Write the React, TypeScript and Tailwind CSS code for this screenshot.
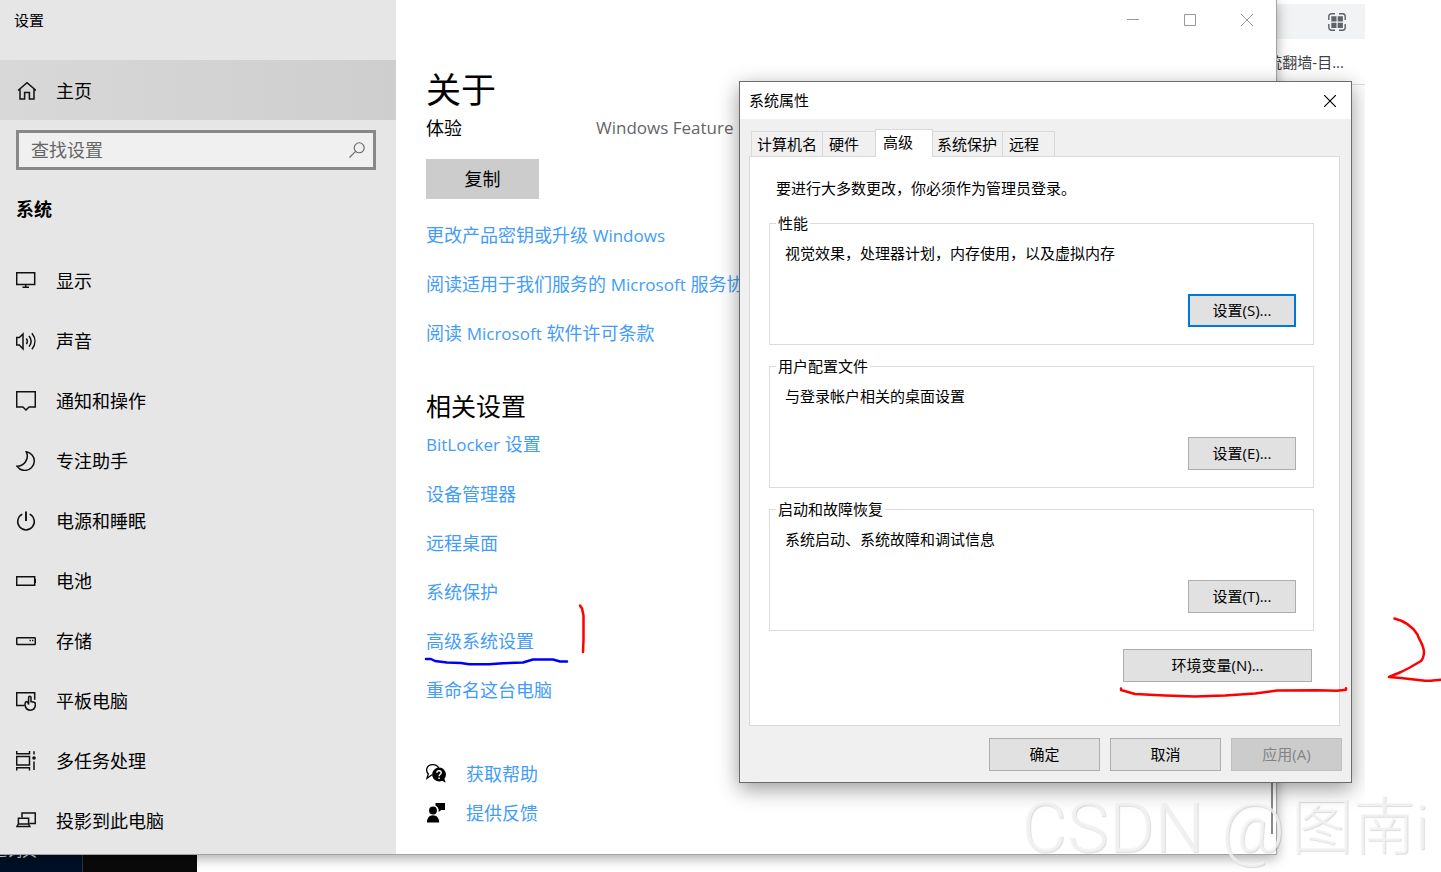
import type { ReactNode } from "react";

const FONT = "font-['Open_Sans','Noto_Sans_CJK_SC',sans-serif]";

function Icon({ children }: { children: ReactNode }) {
  return (
    <svg
      aria-hidden="true"
      className="size-5 shrink-0"
      viewBox="0 0 20 20"
      fill="none"
      stroke="#111"
      strokeWidth="1.5"
    >
      {children}
    </svg>
  );
}

const navItems: { label: string; icon: ReactNode }[] = [
  {
    label: "显示",
    icon: <path d="M.7 1.700h18v11.800H.7zM6.500 16.300h6.500M9.700 13.500v2.800" />,
  },
  {
    label: "声音",
    icon: (
      <>
        <path d="M.7 6.600h2.600L7 3.100v14.800l-3.700-4H.7z" />
        <path d="M10.300 7.500c1.300 1.700 1.300 3.900 0 5.600M13 5c2.600 3.200 2.600 7.400 0 10.600M15.900 2.300c4 4.900 4 11.100 0 16" />
      </>
    ),
  },
  {
    label: "通知和操作",
    icon: <path d="M.7.8h18.600v15.200h-6.200l-3.100 3-3.100-3H.7z" />,
  },
  {
    label: "专注助手",
    icon: (
      <path d="M10.300.8c3.200 6.600-1.800 14.400-9.300 14.500 1.900 2.600 4.600 4.100 7.600 4.100 5.300 0 9.700-4.100 9.700-9.400 0-4.500-3.300-8.300-8-9.200z" />
    ),
  },
  {
    label: "电源和睡眠",
    icon: (
      <>
        <path d="M6.300 3.200a8.300 8.300 0 1 0 7.400 0" />
        <path d="M10 .5v9.500" strokeWidth="1.900" />
      </>
    ),
  },
  {
    label: "电池",
    icon: (
      <>
        <path d="M.7 5.700h18v8.600H.7z" />
        <path d="M19.400 8v4" strokeWidth="1.600" />
      </>
    ),
  },
  {
    label: "存储",
    icon: (
      <>
        <rect x=".7" y="6.700" width="18.600" height="6.800" rx=".8" />
        <path d="M13.500 9.500h1.400M16 9.500h1.400" />
      </>
    ),
  },
  {
    label: "平板电脑",
    icon: (
      <>
        <path d="M8.500 14.400H.7V1.700h18v7" />
        <path d="M12.600 13.500V6.600c0-1.900 2.400-1.900 2.400 0v4l3 .6c1 .3 1.400.9 1.400 1.800 0 4-1.700 6.200-5 6.200-3 0-4.700-1.700-5.300-4.700-.3-1.800.2-3.300 1-3.900.9-.4 1.700.4 2.500 2.900z" />
      </>
    ),
  },
  {
    label: "多任务处理",
    icon: (
      <>
        <path d="M.7 5.500h12.800v8.500H.7zM.7 0v2.700h12.800V0M.7 19.600V16.700h12.800v2.900M18 .3v3.200M18 10.500v8.500" />
        <circle cx="18" cy="7" r="1.800" fill="#111" stroke="none" />
      </>
    ),
  },
  {
    label: "投影到此电脑",
    icon: (
      <>
        <path d="M6 6.500V1.900h13.300v10.700h-6" />
        <path d="M2.400 12.800V7.300h10.200v5.500M.9 15.500l1.500-2.600h10.200l1.200 2.600z" />
      </>
    ),
  },
];

function Latin({ children }: { children: ReactNode }) {
  return <span className="text-[17px]">{children}</span>;
}

const licenseLinks: ReactNode[] = [
  <>
    更改产品密钥或升级 <Latin>Windows</Latin>
  </>,
  <>
    阅读适用于我们服务的 <Latin>Microsoft</Latin> 服务协议
  </>,
  <>
    阅读 <Latin>Microsoft</Latin> 软件许可条款
  </>,
];

const relatedLinks: ReactNode[] = [
  <>
    <Latin>BitLocker</Latin> 设置
  </>,
  "设备管理器",
  "远程桌面",
  "系统保护",
  "高级系统设置",
  "重命名这台电脑",
];

function LinkList({ items }: { items: ReactNode[] }) {
  return (
    <ul>
      {items.map((item, i) => (
        <li key={i} className="flex h-[49px] items-center">
          <a href="#" className="whitespace-nowrap text-[#429cf8]">
            {item}
          </a>
        </li>
      ))}
    </ul>
  );
}

function Sidebar() {
  return (
    <aside className="w-[396px] shrink-0 bg-[#e6e6e6] pb-[3px]">
      <div className="flex h-[60px] items-start px-3.5 pt-2.5 text-[15px] leading-5">设置</div>
      <a
        href="#"
        className="flex h-[60px] items-center gap-5 bg-linear-to-r from-[#d8d8d8] to-[#cecece] px-4 pt-0.5"
      >
        <svg
          aria-hidden="true"
          className="size-5 shrink-0"
          viewBox="0 0 20 20"
          fill="none"
          stroke="#111"
          strokeWidth="1.500"
        >
          <path d="M2 9.500 11 1.700l9 7.800M4 8.300v9.800h4.600v-6.500h4.800v6.500H18V8.300" />
        </svg>
        <span>主页</span>
      </a>
      <label className="mx-4 mt-2.5 mr-5 flex h-10 items-center border-[3px] border-[#888] bg-[#f0f0f0] pr-2 pl-3">
        <input
          type="search"
          aria-label="查找设置"
          placeholder="查找设置"
          className="min-w-0 flex-1 bg-transparent outline-none placeholder:text-[#666]"
        />
        <svg
          aria-hidden="true"
          className="size-4 shrink-0"
          viewBox="0 0 16 16"
          fill="none"
          stroke="#666"
          strokeWidth="1.1"
        >
          <circle cx="10.200" cy="5.800" r="5" />
          <path d="M6.600 9.400.5 15.500" />
        </svg>
      </label>
      <h2 className="flex h-[81px] items-center px-4 pb-1 font-bold">系统</h2>
      <nav>
        {navItems.map((item) => (
          <a key={item.label} href="#" className="flex h-[60px] items-center gap-5 px-4">
            <Icon>{item.icon}</Icon>
            <span>{item.label}</span>
          </a>
        ))}
      </nav>
    </aside>
  );
}

function AboutPage() {
  return (
    <main className="relative min-w-0 flex-1 pl-[30px]">
      <div className="flex h-10 justify-end pr-px">
        <button type="button" aria-label="最小化" className="flex w-[57px] items-center justify-center">
          <svg className="size-3" viewBox="0 0 12 12" stroke="#999">
            <path d="M0 5.500h12" />
          </svg>
        </button>
        <button type="button" aria-label="最大化" className="flex w-[57px] items-center justify-center">
          <svg className="size-3" viewBox="0 0 12 12" stroke="#999" fill="none">
            <path d="M.5.500h11v11H.5z" />
          </svg>
        </button>
        <button type="button" aria-label="关闭" className="flex w-[57px] items-center justify-center">
          <svg className="size-3" viewBox="0 0 12 12" stroke="#999">
            <path d="m0 0 12 12M12 0 0 12" />
          </svg>
        </button>
      </div>
      <h1 className="mt-[30px] text-[35px] leading-10">关于</h1>
      <dl className="mt-1.5 flex h-6 items-center whitespace-nowrap">
        <dt className="w-[170px]">体验</dt>
        <dd className="text-[17px] text-[#666]">Windows Feature E</dd>
      </dl>
      <button type="button" className="mt-[19px] mb-3 block h-10 w-[113px] bg-[#ccc]">
        复制
      </button>
      <LinkList items={licenseLinks} />
      <h2 className="mt-[34px] text-[25px] leading-7">相关设置</h2>
      <LinkList items={relatedLinks} />
      <div className="mt-10">
        <a href="#" className="flex h-[39px] items-center gap-5 text-[#429cf8]">
          <svg aria-hidden="true" className="size-5" viewBox="0 0 20 20">
            <path
              d="M6 10.800 1 14.300l1.300-4.300C.7 8.300.5 6.400.7 5.100 1.300 2.100 4 .7 7 .7c2.700 0 4.700 1.400 5.600 3.300"
              fill="none"
              stroke="#000"
              strokeWidth="1.300"
            />
            <path d="M13 3.500a7 7 0 1 0 3.200 13.300l3.500 2-1.300-4A7 7 0 0 0 13 3.500z" fill="#000" />
            <path
              d="M10.900 8.700c0-2.700 4.300-2.700 4.300 0 0 1.600-2.100 1.600-2.100 3.500M13.100 13.500v1.500"
              fill="none"
              stroke="#fff"
              strokeWidth="1.400"
            />
          </svg>
          <span>获取帮助</span>
        </a>
        <a href="#" className="flex h-[39px] items-center gap-5 text-[#429cf8]">
          <svg aria-hidden="true" className="size-5" viewBox="0 0 20 20">
            <circle cx="7" cy="7.500" r="3.900" />
            <path d="M1 19.500c0-4.500 2.300-7.300 6-7.300s6.200 2.800 6.200 7.300zM9.500 0H19v7h-3.800L12.600 9V6.200C12 4.200 11 3.300 9.500 2.700z" />
          </svg>
          <span>提供反馈</span>
        </a>
      </div>
      <div className="absolute top-[500px] right-[3px] bottom-5 w-0.5 bg-[#888]" />
    </main>
  );
}

const groups = [
  { title: "性能", text: "视觉效果，处理器计划，内存使用，以及虚拟内存", button: "设置(S)...", focused: true },
  { title: "用户配置文件", text: "与登录帐户相关的桌面设置", button: "设置(E)...", focused: false },
  { title: "启动和故障恢复", text: "系统启动、系统故障和调试信息", button: "设置(T)...", focused: false },
];

const tabs = [
  { label: "计算机名", box: "w-[72px] pl-[5px]" },
  { label: "硬件", box: "w-[54px] pl-1.5" },
  { label: "高级", box: "w-[58px] pl-[7px]" },
  { label: "系统保护", box: "w-[71px] pl-1" },
  { label: "远程", box: "w-[53px] pl-1.5" },
];

function SystemProperties() {
  return (
    <section
      role="dialog"
      aria-label="系统属性"
      className="absolute top-[81px] left-[739px] w-[613px] border border-[#6b6b6b] bg-[#f0f0f0] text-[15px] leading-5 shadow-[0_6px_20px_rgba(0,0,0,0.4)]"
    >
      <header className="flex h-[37px] items-center justify-between bg-white pr-[15px] pl-[9px]">
        <h2 className="pb-0.5">系统属性</h2>
        <button type="button" aria-label="关闭">
          <svg className="size-3" viewBox="0 0 12 12" stroke="#000" strokeWidth="1.200">
            <path d="m0 0 12 12M12 0 0 12" />
          </svg>
        </button>
      </header>
      <div role="tablist" className="flex items-end pt-2.5 pl-[11px]">
        {tabs.map((tab) =>
          tab.label === "高级" ? (
            <button
              key={tab.label}
              role="tab"
              type="button"
              aria-selected="true"
              className={`relative z-10 -mb-px -ml-px flex h-7 items-start border border-b-0 border-[#d9d9d9] bg-white pt-0.5 ${tab.box}`}
            >
              {tab.label}
            </button>
          ) : (
            <button
              key={tab.label}
              role="tab"
              type="button"
              aria-selected="false"
              className={`-ml-px flex h-[25px] items-start border border-b-0 border-[#d9d9d9] pt-0.5 whitespace-nowrap first:ml-0 ${tab.box}`}
            >
              {tab.label}
            </button>
          ),
        )}
      </div>
      <div
        role="tabpanel"
        className="mr-[11px] ml-[9px] border border-[#d9d9d9] bg-white pt-[21px] pr-[25px] pb-[43px] pl-[19px]"
      >
        <p className="mb-[15px] pl-[7px]">要进行大多数更改，你必须作为管理员登录。</p>
        <div className="flex flex-col gap-[11px]">
          {groups.map((g) => (
            <fieldset key={g.title} className="border border-[#dcdcdc]">
              <legend className="ml-1.5 px-0.5">{g.title}</legend>
              <div className="flex flex-col pt-2.5 pr-[17px] pb-[17px] pl-[15px]">
                <p>{g.text}</p>
                <button
                  type="button"
                  className={
                    g.focused
                      ? "mt-[31px] h-[33px] w-[108px] self-end border-2 border-[#0078d7] bg-[#e1e1e1] pb-0.5"
                      : "mt-[31px] h-[33px] w-[108px] self-end border border-[#adadad] bg-[#e1e1e1] pb-0.5"
                  }
                >
                  {g.button}
                </button>
              </div>
            </fieldset>
          ))}
        </div>
        <button
          type="button"
          className="mt-[18px] mr-0.5 ml-auto block h-[33px] w-[189px] border border-[#adadad] bg-[#e1e1e1] pb-0.5"
        >
          环境变量(N)...
        </button>
      </div>
      <footer className="flex justify-end gap-2.5 pt-3 pr-[9px] pb-[11px]">
        <button type="button" className="h-[33px] w-[111px] border border-[#adadad] bg-[#e1e1e1] pb-0.5">
          确定
        </button>
        <button type="button" className="h-[33px] w-[111px] border border-[#adadad] bg-[#e1e1e1] pb-0.5">
          取消
        </button>
        <button
          type="button"
          disabled
          className="h-[33px] w-[111px] border border-[#bfbfbf] bg-[#ccc] pb-0.5 text-[#838383]"
        >
          应用(A)
        </button>
      </footer>
    </section>
  );
}

function BrowserBehind() {
  return (
    <div className="absolute inset-y-0 right-[76px] w-24 pt-1 text-[15px] text-[#3c4043]">
      <div className="flex h-[35px] items-center justify-end bg-[#f1f3f4] pr-[19px]">
        <svg aria-hidden="true" className="size-[18px]" viewBox="0 0 18 18" fill="none" stroke="#5f6368" strokeWidth="1.400">
          <path d="M.8 7V3.500C.8 2 2 .8 3.500.8H7M11 .8h3.500c1.500 0 2.700 1.200 2.700 2.700V7M17.200 11v3.500c0 1.500-1.200 2.700-2.700 2.700H11M7 17.200H3.500C2 17.200.8 16 .8 14.500V11" />
          <path d="M3.300 3.300h5.200v5.200H3.300zM9.700 3.300h5.200v5.200H9.700zM3.300 9.700h5.200v5.200H3.300zM9.700 9.700h5.200v5.200H9.700z" fill="#5f6368" stroke="none" />
        </svg>
      </div>
      <div className="flex h-[46px] items-center justify-end border-b border-[#dadce0] pr-[21px] whitespace-nowrap">
        统翻墙-目...
      </div>
    </div>
  );
}

export default function App() {
  return (
    <div
      className={`relative min-h-screen overflow-hidden bg-white text-[18px] leading-6 text-black ${FONT}`}
    >
      <BrowserBehind />
      <div className="absolute bottom-0 left-0 flex h-8 w-[197px] bg-[#0a0a0a] text-[15px] leading-5 text-[#ddd]">
        <div className="w-[83px] overflow-hidden border-r border-[#333] bg-[#001026]">
          <span className="-ml-2 block whitespace-nowrap">道词典</span>
        </div>
      </div>
      <div className="relative mr-[164px] flex border-r border-b border-[#a3a3a3] bg-white shadow-[0_3px_12px_rgba(0,0,0,0.35)]">
        <Sidebar />
        <AboutPage />
      </div>
      <div className="pointer-events-none absolute inset-y-0 left-0 w-[1365px] overflow-hidden">
        <div className="pointer-events-auto">
          <SystemProperties />
        </div>
      </div>
      <svg
        aria-hidden="true"
        className="pointer-events-none absolute top-[600px] left-[420px] h-[100px] w-[1021px]"
        viewBox="0 0 1021 100"
        fill="none"
        strokeWidth="2.500"
        strokeLinecap="round"
        strokeLinejoin="round"
      >
        <path
          d="M6 59h5l4 2 12 1.500 14 .5 8 1.200h20l14-1 20-.7 10-3h20l7 2h7"
          stroke="#0000f5"
        />
        <path d="M160 5.500l2 3 1.500 7v24l-.5 12.500" stroke="#f00" />
        <path
          d="M701 88.500v1.500l14 4 30 1.500 30 1 30-1 30-2 22-3 40-.2 20 .5 9-1v-1.500"
          stroke="#f00"
        />
        <path
          d="M974.500 18.500c10 2.500 18 8 23 16 1 5 6 9 6.500 17.500-.2 4-1 7-3 9l-6 3.500-6 3.500-8 4-12 5 14 1.200 22 2.500c7 .5 11-1 16-1"
          stroke="#f00"
        />
      </svg>
      <div className="pointer-events-none absolute right-3 bottom-1 flex items-center gap-1.5 font-['Roboto','Noto_Sans_CJK_SC',sans-serif] text-[70px] leading-[80px] font-light whitespace-nowrap text-[#f5f5f5]/80 [text-shadow:1px_1px_1px_rgba(0,0,0,0.14)]">
        <span>CSDN @</span>
        <span className="text-[62px]">图南i</span>
      </div>
    </div>
  );
}
